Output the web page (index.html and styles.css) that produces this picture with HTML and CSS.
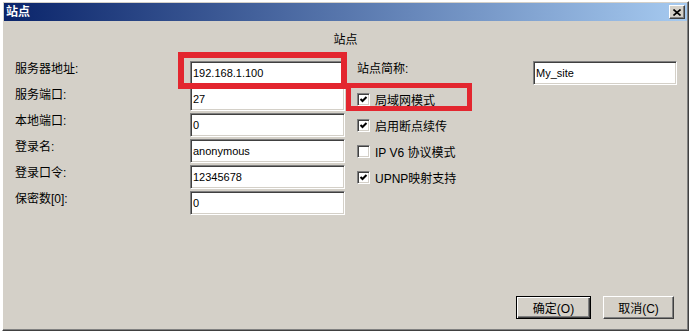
FILE: index.html
```html
<!DOCTYPE html>
<html>
<head>
  <meta charset="UTF-8">
  <title>站点</title>
  <link rel="stylesheet" href="styles.css">
</head>
<body>
  <div class="window">
    <div class="titlebar">
      <span class="title">站点</span>
      <span class="close">
        <svg width="8" height="7" viewBox="0 0 8 7"><path d="M0.5 0.5 L7.5 6.5 M7.5 0.5 L0.5 6.5" stroke="#000" stroke-width="1.6" fill="none"/></svg>
      </span>
    </div>

    <div class="content">
      <div class="heading">站点</div>

      <div class="form">
        <div class="fields">
          <label>服务器地址:</label><input class="edit" value="192.168.1.100">
          <label>服务端口:</label><input class="edit" value="27">
          <label>本地端口:</label><input class="edit" value="0">
          <label>登录名:</label><input class="edit" value="anonymous">
          <label>登录口令:</label><input class="edit" value="12345678">
          <label>保密数[0]:</label><input class="edit" value="0">
        </div>

        <div class="options">
          <label>站点简称:</label><input class="edit short" value="My_site">
          <div class="check-row"><span class="box checked"></span>局域网模式</div>
          <div class="check-row"><span class="box checked"></span>启用断点续传</div>
          <div class="check-row"><span class="box"></span>IP V6 协议模式</div>
          <div class="check-row"><span class="box checked"></span>UPNP映射支持</div>
        </div>
      </div>

      <div class="buttons">
        <button class="btn default">确定(O)</button>
        <button class="btn cancel">取消(C)</button>
      </div>
    </div>

    <!-- red annotation frames -->
    <div class="mark mark-address"></div>
    <div class="mark mark-lan"></div>
  </div>
</body>
</html>
```

FILE: styles.css
```css
body {
  margin: 0;
  background: #fff;
  font-family: "Liberation Sans", "Noto Sans CJK SC", sans-serif;
  font-size: 12px;
  color: #000;
}
.window {
  position: relative;
  box-sizing: border-box;
  width: 687px;
  height: 330px;
  margin: 1px 0 0 2px;
  padding: 1px;
  display: flex;
  flex-direction: column;
  background: #d4d0c8;
  border: 1px solid;
  border-color: #fff #404040 #404040 #fff;
  box-shadow: inset -1px -1px #808080;
}
.titlebar {
  height: 18px;
  display: flex;
  align-items: center;
  justify-content: space-between;
  padding: 0 2px 0 2px;
  background: linear-gradient(to right, #0a246a, #a6caf0);
}
.title {
  color: #fff;
  font-weight: bold;
  font-size: 12px;
  line-height: 16px;
}
.close {
  box-sizing: border-box;
  width: 16px;
  height: 14px;
  display: flex;
  align-items: center;
  justify-content: center;
  background: #d4d0c8;
  border: 1px solid;
  border-color: #fff #404040 #404040 #fff;
  box-shadow: inset -1px -1px #808080;
}
.content {
  flex: 1;
  display: flex;
  flex-direction: column;
  padding: 11px 13px 10px 11px;
}
.heading {
  text-align: center;
  line-height: 16px;
  margin-left: 2px;
}
.form {
  display: flex;
  gap: 12px;
  margin-top: 13px;
}
.fields {
  display: grid;
  grid-template-columns: 175px 155px;
  grid-auto-rows: 24px;
  row-gap: 2px;
}
.options {
  display: grid;
  grid-template-columns: 176px 144px;
  grid-auto-rows: 24px;
  row-gap: 2px;
}
label {
  line-height: 16px;
}
.edit {
  box-sizing: border-box;
  width: 155px;
  height: 24px;
  margin: 0;
  padding: 0 2px;
  font-family: "Liberation Sans", sans-serif;
  font-size: 11px;
  color: #000;
  background: #fff;
  border: 1px solid;
  border-color: #808080 #fff #fff #808080;
  box-shadow: inset 1px 1px #404040, inset -1px -1px #d4d0c8;
  outline: none;
}
.edit.short {
  width: 144px;
}
.check-row {
  grid-column: 1 / 3;
  display: flex;
  align-items: center;
  gap: 5px;
}
.box {
  box-sizing: border-box;
  width: 13px;
  height: 13px;
  background: #fff;
  border: 1px solid;
  border-color: #808080 #fff #fff #808080;
  box-shadow: inset 1px 1px #404040, inset -1px -1px #d4d0c8;
}
.box.checked {
  background: #fff url("data:image/svg+xml;utf8,<svg xmlns='http://www.w3.org/2000/svg' width='11' height='11'><polyline points='2.5,5 4.5,7 8.5,3' fill='none' stroke='black' stroke-width='2'/></svg>") no-repeat center;
}
.buttons {
  margin-top: auto;
  display: flex;
  justify-content: flex-end;
  gap: 12px;
}
.btn {
  box-sizing: border-box;
  width: 71px;
  height: 23px;
  padding: 0;
  font-family: "Liberation Sans", "Noto Sans CJK SC", sans-serif;
  font-size: 12px;
  color: #000;
  background: #d4d0c8;
  border: 1px solid;
  border-color: #fff #404040 #404040 #fff;
  box-shadow: inset -1px -1px #808080;
}
.btn.default {
  width: 75px;
  border: 1px solid #000;
  box-shadow: inset 1px 1px #fff, inset -1px -1px #404040, inset -2px -2px #808080;
}
.mark {
  position: absolute;
  box-sizing: border-box;
  border: 6px solid #e3262f;
}
.mark-address {
  left: 175px;
  top: 50px;
  width: 169px;
  height: 37px;
}
.mark-lan {
  left: 343px;
  top: 81px;
  width: 126px;
  height: 28px;
  border-width: 5px;
}
```
